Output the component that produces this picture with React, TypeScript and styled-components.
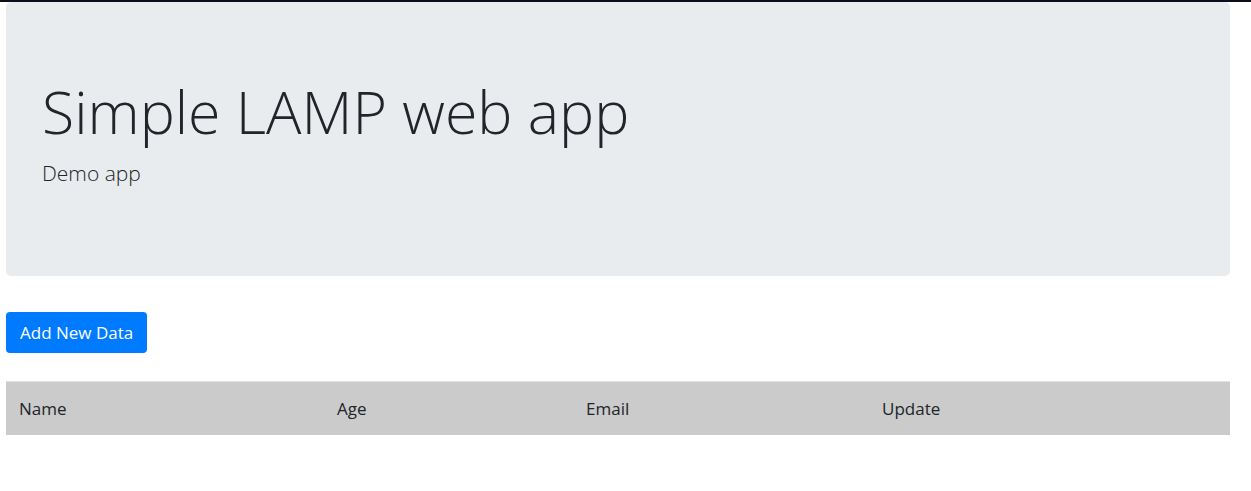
import React from "react";
import styled, { createGlobalStyle } from "styled-components";

const Global = createGlobalStyle`
  html, body { margin: 0; padding: 0; background: #fff; }
  body { font-family: "Open Sans", "Noto Sans", sans-serif; color: #212529; }
`;

const TopBar = styled.div`
  height: 2px;
  background: #0f0c1d;
`;

const Page = styled.div`
  padding: 0 21px 0 6px;
  display: flex;
  flex-direction: column;
`;

const Jumbo = styled.header`
  background: #e9ecef;
  border-radius: 5px;
  height: 274px;
  padding: 74px 36px 0;
  box-sizing: border-box;
  display: flex;
  flex-direction: column;
`;

const Title = styled.h1`
  margin: 0;
  font-size: 59px;
  font-weight: 300;
  line-height: 1.2;
  color: #212529;
`;

const Lead = styled.p`
  margin: 11px 0 0;
  font-size: 21px;
  font-weight: 300;
  line-height: 1.5;
  color: #212529;
`;

const Button = styled.button`
  align-self: flex-start;
  margin-top: 36px;
  height: 41px;
  padding: 0 14px;
  background: #007bff;
  color: #fff;
  border: none;
  border-radius: 4px;
  font-family: inherit;
  font-size: 17px;
`;

const Table = styled.table`
  margin-top: 28px;
  width: 100%;
  border-collapse: collapse;
`;

const HeadCell = styled.th<{ $w: number }>`
  width: ${(p) => p.$w}px;
  background: #cbcbcb;
  border-top: 1px solid #dee2e6;
  height: 53px;
  box-sizing: border-box;
  padding: 0 13px;
  text-align: left;
  font-weight: 400;
  font-size: 17px;
  color: #212529;
`;

export default function App() {
  return (
    <>
      <Global />
      <TopBar />
      <Page>
        <Jumbo>
          <Title>Simple LAMP web app</Title>
          <Lead>Demo app</Lead>
        </Jumbo>
        <Button>Add New Data</Button>
        <Table>
          <thead>
            <tr>
              <HeadCell $w={318}>Name</HeadCell>
              <HeadCell $w={249}>Age</HeadCell>
              <HeadCell $w={296}>Email</HeadCell>
              <HeadCell $w={361}>Update</HeadCell>
            </tr>
          </thead>
        </Table>
      </Page>
    </>
  );
}
